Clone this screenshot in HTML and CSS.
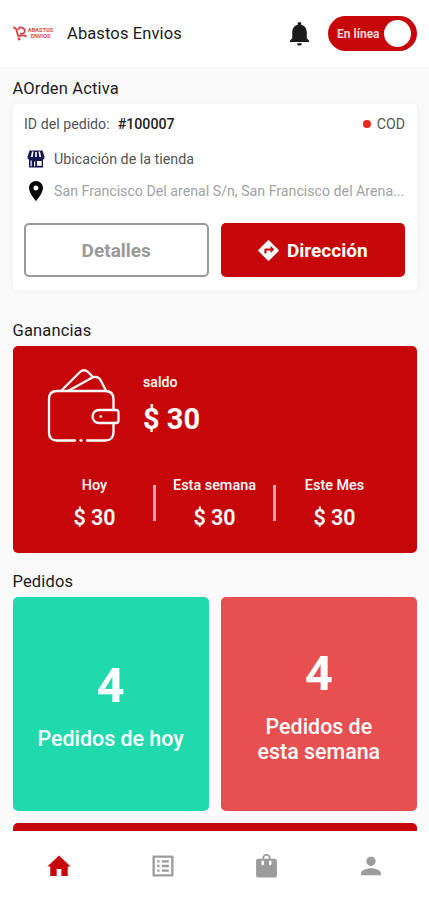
FILE: index.html
```html
<!DOCTYPE html>
<html lang="es">
<head>
<meta charset="utf-8">
<meta name="viewport" content="width=device-width, initial-scale=1">
<title>Abastos Envios</title>
<link rel="stylesheet" href="styles.css">
</head>
<body>
<div class="app">
  <header class="topbar">
    <div class="logo">
      <svg class="logo-cart" viewBox="0 0 14 15" fill="none" stroke="#d9373b" stroke-width="1.700" stroke-linecap="round" stroke-linejoin="round"><path d="M1 1.500 3.200 3 5 9.800l7-.3"/><path d="M5.500 3.200C6 1.800 7.500 1.300 8.800 1.600c2 .3 3.300 2 2.800 4C11.200 7.500 9.200 8.200 7.500 7.700"/><circle cx="6" cy="13" r=".6"/><circle cx="12.500" cy="10" r=".4"/></svg>
      <span class="logo-text"><span>ABASTOS</span><span>ENVIOS</span></span>
    </div>
    <h1 class="brand">Abastos Envios</h1>
    <svg class="bell" viewBox="0 0 24 24"><path fill="#1b1b1b" d="M12 22c1.100 0 2-.9 2-2h-4c0 1.100.9 2 2 2zm6-6v-5c0-3.070-1.640-5.640-4.500-6.320V4c0-.83-.67-1.500-1.500-1.500s-1.500.67-1.500 1.500v.68C7.630 5.360 6 7.920 6 11v5l-2 2v1h16v-1l-2-2z"/></svg>
    <div class="switch"><span class="switch-label">En línea</span><span class="knob"></span></div>
  </header>

  <main class="content">
    <h2 class="section-title">AOrden Activa</h2>
    <section class="order">
      <div class="order-head">
        <span class="order-label">ID del pedido:</span>
        <span class="order-id">#100007</span>
        <span class="dot"></span>
        <span class="cod">COD</span>
      </div>
      <div class="order-row store">
        <svg class="store-icon" viewBox="0 0 18 18"><path fill="#17174f" d="M2.500.5h13l2 6.500c0 1.500-.7 2.400-1.500 2.700V17.500H2V9.700C1.200 9.400.5 8.500.5 7z"/><path fill="#fff" d="M5 1.500h1.500L5.700 7H3.800zM11.500 1.500H13L14.200 7h-1.800zM8.200 2h1.600v5H8.200zM3.500 10.500h1.200v5.800H3.500zM7 11.500h1.200v4.800H7zM10 11h4.700v4.700H10z"/></svg>
        <span>Ubicación de la tienda</span>
      </div>
      <div class="order-row address">
        <svg class="pin-icon" viewBox="5 2 14 20"><path fill="#0b0b0b" d="M12 2C8.130 2 5 5.130 5 9c0 5.250 7 13 7 13s7-7.750 7-13c0-3.870-3.130-7-7-7zm0 9.500a2.500 2.500 0 1 1 0-5 2.500 2.500 0 0 1 0 5z"/></svg>
        <span class="address-text">San Francisco Del arenal S/n, San Francisco del Arena...</span>
      </div>
      <div class="actions">
        <button class="btn outline">Detalles</button>
        <button class="btn solid">
          <svg class="dir-icon" viewBox="1.800 1.800 20.400 20.400"><path fill="#fff" d="M21.710 11.290l-9-9c-.39-.39-1.020-.39-1.410 0l-9 9c-.39.39-.39 1.020 0 1.410l9 9c.39.39 1.020.39 1.410 0l9-9c.39-.38.39-1.010 0-1.410zM14 14.500V12h-4v3H8v-4c0-.55.45-1 1-1h5V7.500l3.500 3.500-3.500 3.500z"/></svg>
          <span>Dirección</span>
        </button>
      </div>
    </section>

    <h2 class="section-title earnings-title">Ganancias</h2>
    <section class="earnings">
      <div class="balance">
        <svg class="wallet" viewBox="0 0 74 74" fill="none" stroke="#fff" stroke-width="2.300" stroke-linecap="round" stroke-linejoin="round">
          <path d="M28 71.500H10Q2 71.500 2 63.500V30Q2 22 10 22H58Q66.500 22 66.500 30V40.500M66.500 54V63Q66.500 71.500 58 71.500H40M33.500 71.500h1"/>
          <path d="M52 41H69q2.500 0 2.500 2.500v8Q71.500 54 69 54H52a6.500 6.500 0 0 1 0-13zM53.500 47.500h.5"/>
          <path d="M14.500 21.500 33 3q4-3.500 8 0L46 8M22 21.500 44.500 9q6-3 9 2L59 21.500"/>
        </svg>
        <div class="balance-text"><span class="balance-label">saldo</span><span class="balance-value">$ 30</span></div>
      </div>
      <div class="periods">
        <div class="period"><span>Hoy</span><strong>$ 30</strong></div>
        <i class="divider"></i>
        <div class="period"><span>Esta semana</span><strong>$ 30</strong></div>
        <i class="divider"></i>
        <div class="period"><span>Este Mes</span><strong>$ 30</strong></div>
      </div>
    </section>

    <h2 class="section-title orders-title">Pedidos</h2>
    <section class="tiles">
      <div class="tile green"><strong>4</strong><span>Pedidos de hoy</span></div>
      <div class="tile coral"><strong>4</strong><span>Pedidos de<br>esta semana</span></div>
      <div class="tile wide"></div>
    </section>
  </main>

  <nav class="tabs">
    <svg viewBox="0 0 24 24" fill="#c60608"><path d="M10 20.500v-6h4v6h5.500v-8H22L12 3 2 12.500h2.500v8z"/></svg>
    <svg viewBox="0 0 24 24" fill="#9c9c9c"><path d="M19 5v14H5V5h14m1.100-2H3.900c-.5 0-.9.4-.9.9v16.200c0 .4.4.9.9.9h16.200c.4 0 .9-.5.9-.9V3.900c0-.5-.5-.9-.9-.9zM11 7h6v2h-6V7zm0 4h6v2h-6v-2zm0 4h6v2h-6zM7 7h2v2H7zm0 4h2v2H7zm0 4h2v2H7z"/></svg>
    <svg class="bag" viewBox="0 0 24 24" fill="#9c9c9c"><path fill-rule="evenodd" d="M4 5.500h4V5a4 4 0 0 1 8 0v.5h4q2 0 2 2v14q0 2-2 2H4q-2 0-2-2v-14q0-2 2-2zm5.700 0h4.600V5a2.300 2.300 0 0 0-4.600 0zM7.200 7.500v3a1.200 1.200 0 0 0 2.400 0v-3zm7.200 0v3a1.200 1.200 0 0 0 2.400 0v-3z"/></svg>
    <svg class="person" viewBox="0 0 24 24" fill="#9c9c9c"><path d="M12 12c2.210 0 4-1.790 4-4s-1.790-4-4-4-4 1.790-4 4 1.790 4 4 4zm0 2c-2.670 0-8.500 1.340-8.500 4v2h17v-2c0-2.660-5.830-4-8.500-4z"/></svg>
  </nav>
</div>
</body>
</html>
```

FILE: styles.css
```css
* { box-sizing: border-box; }
body { margin: 0; font-family: Roboto, "Liberation Sans", sans-serif; background: #fafafa; color: #1c1c1c; }
h1, h2 { margin: 0; font-weight: 400; }
svg { display: block; flex: none; }
.app { width: 429px; height: 900px; display: flex; flex-direction: column; overflow: hidden; }

.topbar { height: 67px; flex: none; background: #fff; display: flex; align-items: center; padding: 0 12px 0 13px; }
.logo { width: 54px; display: flex; align-items: center; gap: 1px; }
.logo-cart { width: 14px; height: 15px; }
.logo-text { display: flex; flex-direction: column; align-items: center; font-size: 5.600px; line-height: 5.500px; font-weight: 700; color: #dc4a4d; }
.brand { font-size: 16.500px; letter-spacing: .12px; line-height: 20px; flex: 1; }
.bell { width: 29px; height: 29px; margin-right: 14px; }
.switch { width: 89px; height: 35px; border-radius: 18px; background: #c60608; display: flex; align-items: center; justify-content: space-between; padding: 0 6px 0 9px; }
.switch-label { font-size: 12px; font-weight: 700; color: #f9d5d5; }
.knob { width: 27px; height: 27px; border-radius: 50%; background: #fff; }

.content { height: 764px; flex: none; padding: 12px 12px 0 12.500px; overflow: hidden; }
.section-title { font-size: 16.500px; line-height: 20px; letter-spacing: .15px; }
.order { height: 186px; margin-top: 5px; padding: 10px 12px 0 11.500px; background: #fff; border-radius: 4px; box-shadow: 0 0 8px rgba(0,0,0,.05); }
.order-head { height: 20px; display: flex; align-items: center; font-size: 14.200px; color: #555; }
.order-id { margin-left: 8px; font-weight: 500; color: #222; flex: 1; }
.dot { width: 8px; height: 8px; border-radius: 50%; background: #f0251f; margin-right: 6px; }
.order-row { display: flex; align-items: center; height: 20px; font-size: 14.300px; }
.store { margin-top: 15px; color: #555; }
.store-icon { width: 18px; height: 18px; margin: 0 9px 0 3px; }
.address { margin-top: 12px; color: #a2a2a2; font-size: 14.200px; }
.pin-icon { width: 14px; height: 20px; margin: 0 11px 0 5px; }
.address-text { white-space: nowrap; }
.actions { display: grid; grid-template-columns: 1fr 1fr; gap: 12px; margin-top: 22px; }
.btn { height: 54px; border: 0; border-radius: 5px; font-family: inherit; font-size: 19px; font-weight: 700; display: flex; align-items: center; justify-content: center; gap: 8px; padding: 0; }
.outline { background: #fff; border: 2px solid #999; color: #999; }
.solid { background: #c60608; color: #fff; }
.dir-icon { width: 21px; height: 21px; }

.earnings-title { margin-top: 31px; }
.earnings { height: 207px; margin-top: 5px; border-radius: 5px; background: #c60608; color: #fff; padding: 22px 24px 0 23.500px; }
.balance { display: flex; gap: 22px; padding-left: 11px; }
.wallet { width: 74px; height: 76px; }
.balance-text { display: flex; flex-direction: column; padding-top: 5px; }
.balance-label { font-size: 14.200px; line-height: 18px; font-weight: 500; }
.balance-value { font-size: 29px; line-height: 34px; margin-top: 11px; font-weight: 700; }
.periods { display: flex; align-items: flex-start; margin-top: 33px; }
.period { flex: 1; display: flex; flex-direction: column; align-items: center; white-space: nowrap; }
.period span { font-size: 14.400px; line-height: 18px; font-weight: 500; }
.period strong { font-size: 21.500px; line-height: 26px; margin-top: 10px; font-weight: 600; }
.divider { width: 3px; height: 36px; margin-top: 8px; background: #eba3a3; flex: none; }

.orders-title { margin-top: 19px; }
.tiles { display: grid; grid-template-columns: 1fr 1fr; gap: 12px; margin-top: 5px; }
.tile { height: 214px; border-radius: 5px; color: #fff; display: flex; flex-direction: column; align-items: center; justify-content: center; text-align: center; }
.tile strong { font-size: 49px; line-height: 58px; font-weight: 700; }
.tile span { font-size: 21.400px; line-height: 25px; margin-top: 11px; font-weight: 500; }
.green { background: #20d9ad; }
.coral { background: #e84f50; }
.wide { grid-column: 1 / -1; background: #c60608; }

.tabs { height: 69px; flex: none; background: #fff; display: grid; grid-template-columns: repeat(4, 104px); justify-content: center; justify-items: center; align-items: center; }
.tabs svg { width: 28px; height: 28px; }
.tabs .bag { width: 25px; height: 25px; }
```
